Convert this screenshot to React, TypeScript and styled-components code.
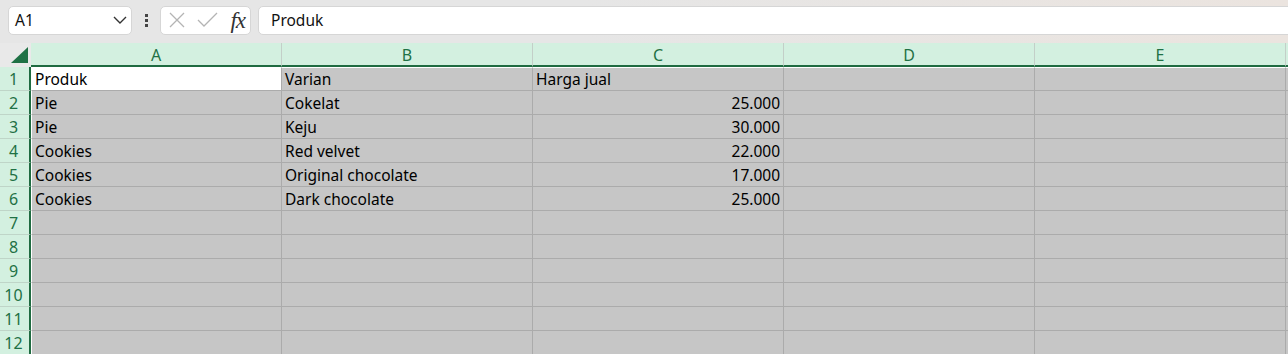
import styled, { createGlobalStyle } from "styled-components"

const GlobalStyle = createGlobalStyle`
  body {
    margin: 0;
    font-family: "Noto Sans", "Open Sans", sans-serif;
    background: #ffffff;
  }
`

const columns = ["A", "B", "C", "D", "E"]

const rows: string[][] = [
  ["Produk", "Varian", "Harga jual"],
  ["Pie", "Cokelat", "25.000"],
  ["Pie", "Keju", "30.000"],
  ["Cookies", "Red velvet", "22.000"],
  ["Cookies", "Original chocolate", "17.000"],
  ["Cookies", "Dark chocolate", "25.000"],
  [],
  [],
  [],
  [],
  [],
  [],
]

const isNumber = (v: string) => /^[\d.]+$/.test(v)

export default function App() {
  return (
    <>
      <GlobalStyle />
      <Page>
        <Toolbar>
          <NameBox>
            <span>A1</span>
            <svg width="14" height="8" viewBox="0 0 14 8">
              <path d="M1 1 L7 7 L13 1" fill="none" stroke="#333" strokeWidth="1.4" />
            </svg>
          </NameBox>
          <Kebab>
            <i />
            <i />
            <i />
          </Kebab>
          <FormulaButtons>
            <svg width="16" height="16" viewBox="0 0 16 16">
              <path d="M1 1 L15 15 M15 1 L1 15" stroke="#b4b4b4" strokeWidth="1.3" />
            </svg>
            <svg width="21" height="16" viewBox="0 0 21 16">
              <path d="M1 8 L7 14 L20 1" fill="none" stroke="#b4b4b4" strokeWidth="1.3" />
            </svg>
            <Fx>fx</Fx>
          </FormulaButtons>
          <FormulaInput>Produk</FormulaInput>
        </Toolbar>

        <Sheet>
          <Corner>
            <svg width="17" height="16" viewBox="0 0 17 16">
              <path d="M17 0 L17 16 L0 16 Z" fill="#1f7145" />
            </svg>
          </Corner>
          {columns.map((c) => (
            <ColHeader key={c}>{c}</ColHeader>
          ))}
          <ColHeader $last />

          {rows.map((r, i) => (
            <Row key={i}>
              <RowHeader>{i + 1}</RowHeader>
              {[0, 1, 2, 3, 4, 5].map((ci) => {
                const v = r[ci] ?? ""
                return (
                  <Cell
                    key={ci}
                    $first={i === 0}
                    $firstCol={ci === 0}
                    $active={i === 0 && ci === 0}
                    $right={isNumber(v) && v !== ""}
                  >
                    {v}
                  </Cell>
                )
              })}
            </Row>
          ))}
        </Sheet>
      </Page>
    </>
  )
}

const Page = styled.div`
  width: 1288px;
  height: 354px;
  overflow: hidden;
  background: #c6c6c6;
`

const Toolbar = styled.div`
  display: flex;
  align-items: center;
  height: 43px;
  padding: 0 0 3px 8px;
  box-sizing: border-box;
  background: linear-gradient(90deg, #e6e6e6 0%, #e6e6e6 45%, #ebe4df 100%);
`

const NameBox = styled.div`
  display: flex;
  align-items: center;
  justify-content: space-between;
  width: 124px;
  height: 29px;
  box-sizing: border-box;
  padding: 0 4px 0 6px;
  background: #fff;
  border: 1px solid #d6d6d6;
  border-radius: 5px;
  font-size: 15.5px;
  color: #111;
`

const Kebab = styled.div`
  display: flex;
  flex-direction: column;
  align-items: center;
  gap: 2px;
  width: 28px;

  i {
    display: block;
    width: 3px;
    height: 3px;
    background: #444;
  }
`

const FormulaButtons = styled.div`
  display: flex;
  align-items: center;
  gap: 12px;
  width: 91px;
  height: 29px;
  box-sizing: border-box;
  padding: 0 5px 0 8px;
  background: #fff;
  border: 1px solid #d6d6d6;
  border-radius: 5px;
`

const Fx = styled.span`
  font-family: "Liberation Serif", "DejaVu Serif", serif;
  font-style: italic;
  font-size: 23px;
  color: #333;
  margin-left: auto;
  letter-spacing: -1px;
  line-height: 1;
`

const FormulaInput = styled.div`
  flex: 1;
  display: flex;
  align-items: center;
  height: 29px;
  margin-left: 7px;
  margin-right: -10px;
  padding-left: 12px;
  box-sizing: border-box;
  background: #fff;
  border: 1px solid #d6d6d6;
  border-radius: 5px;
  font-size: 15.5px;
  color: #111;
`

const Sheet = styled.div`
  display: grid;
  grid-template-columns: 31px repeat(5, 251px) 1fr;
  grid-auto-rows: auto;
  font-size: 15.5px;
`

const Row = styled.div`
  display: contents;
`

const Corner = styled.div`
  height: 24px;
  box-sizing: border-box;
  background: #e9e9e9;
  display: flex;
  align-items: flex-end;
  justify-content: flex-end;
  padding: 0 3px 4px 0;
`

const ColHeader = styled.div<{ $last?: boolean }>`
  height: 24px;
  box-sizing: border-box;
  display: flex;
  align-items: center;
  justify-content: center;
  background: #d3f0e0;
  color: #1f7145;
  font-size: 16px;
  border-bottom: 2px solid #1f6b41;
  border-right: ${(p) => (p.$last ? "none" : "1px solid #c3cfc8")};
  padding-top: 1px;
`

const RowHeader = styled.div`
  height: 24px;
  box-sizing: border-box;
  display: flex;
  align-items: center;
  justify-content: center;
  background: #d3f0e0;
  color: #1f7145;
  font-size: 16px;
  border-right: 2px solid #1f6b41;
  border-bottom: 1px solid #bfd5c8;
  padding-right: 2px;
`

const Cell = styled.div<{ $first?: boolean; $firstCol?: boolean; $active?: boolean; $right?: boolean }>`
  height: 24px;
  box-sizing: border-box;
  display: flex;
  align-items: center;
  justify-content: ${(p) => (p.$right ? "flex-end" : "flex-start")};
  padding: 0 3px 0 3px;
  background: ${(p) => (p.$active ? "#ffffff" : "#c6c6c6")};
  color: #000;
  white-space: nowrap;
  border-right: 1px solid #ababab;
  border-bottom: 1px solid #ababab;
  border-top: ${(p) => (p.$first ? "1px solid #ffffff" : "none")};
  border-left: ${(p) => (p.$firstCol ? "1px solid #ffffff" : "none")};
`
